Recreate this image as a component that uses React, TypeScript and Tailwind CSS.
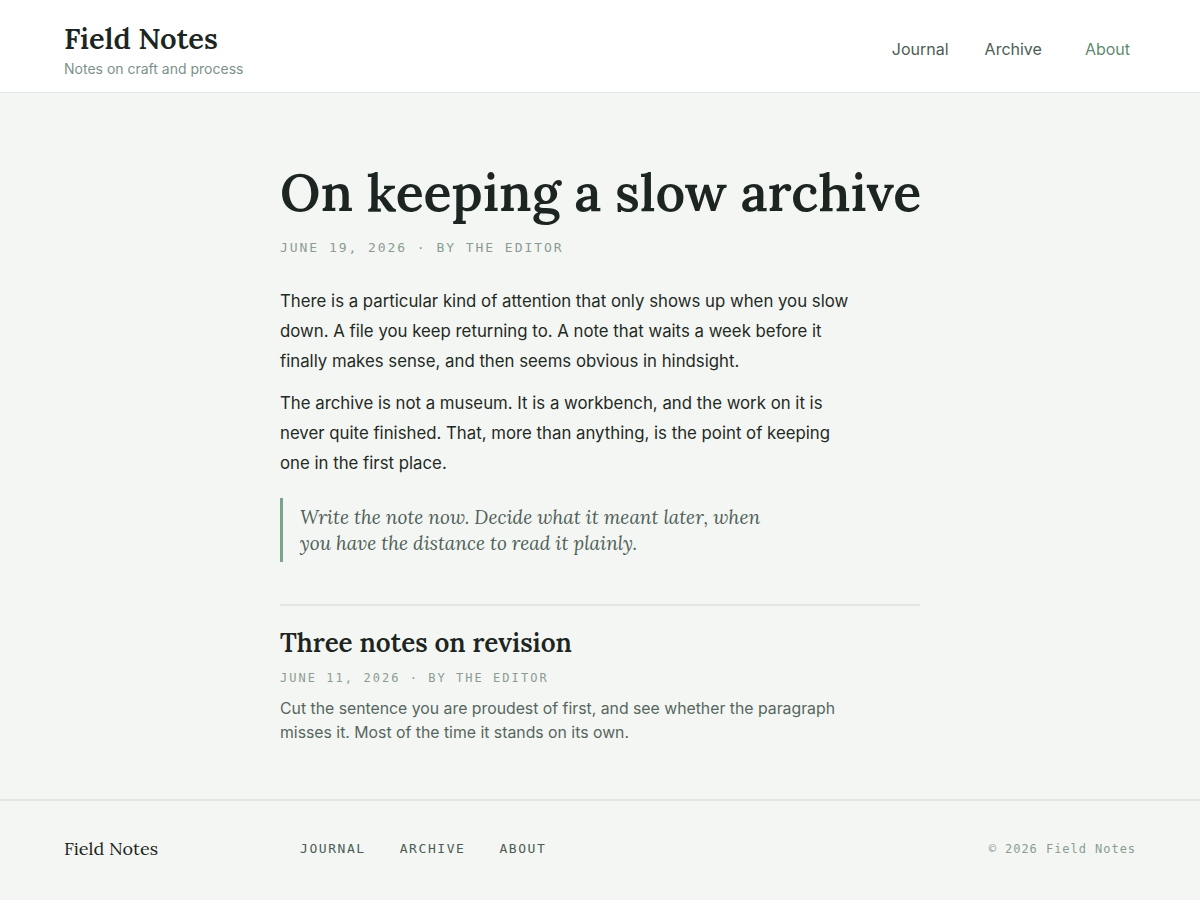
import React from "react";

const serif = "font-['Lora','Liberation_Serif','DejaVu_Serif',serif]";
const sans = "font-['Inter','Liberation_Sans',sans-serif]";
const mono = "font-['DejaVu_Sans_Mono','Liberation_Mono',monospace]";

function Header() {
  return (
    <header className="flex h-[93px] items-center justify-between border-b border-[#e3e7e3] bg-white pl-16 pr-[70px]">
      <div className="flex flex-col pt-[7px]">
        <a href="#" className={`${serif} text-[29px] font-semibold leading-[36px] text-[#1c2521]`}>
          Field Notes
        </a>
        <span className={`${sans} mt-[2px] text-[14px] leading-5 text-[#7d918a]`}>
          Notes on craft and process
        </span>
      </div>
      <nav className={`${sans} flex items-center pt-[6px] text-[16px] text-[#4b5d55]`}>
        <a href="#" className="mr-[36px]">Journal</a>
        <a href="#" className="mr-[43px]">Archive</a>
        <a href="#" className="text-[#5f8a6f]">About</a>
      </nav>
    </header>
  );
}

function Meta({ children, small }: { children: React.ReactNode; small?: boolean }) {
  return (
    <p
      className={`${mono} uppercase text-[#8b9c94] ${
        small ? "text-[12px] tracking-[0.17em]" : "text-[13px] tracking-[0.15em]"
      }`}
    >
      {children}
    </p>
  );
}

function Article() {
  return (
    <article className="mx-auto w-[640px] pt-[67px]">
      <h1 className={`${serif} whitespace-nowrap text-[52px] font-semibold leading-[64px] text-[#1c2521]`}>
        On keeping a slow archive
      </h1>
      <div className="mt-[14px]">
        <Meta>June 19, 2026 · By the Editor</Meta>
      </div>

      <div className={`${sans} mt-[28px] max-w-[580px] space-y-3 text-[16.8px] leading-[30px] text-[#1f2a25]`}>
        <p>
          There is a particular kind of attention that only shows up when you slow down. A file you
          keep returning to. A note that waits a week before it finally makes sense, and then seems
          obvious in hindsight.
        </p>
        <p>
          The archive is not a museum. It is a workbench, and the work on it is never quite
          finished. That, more than anything, is the point of keeping one in the first place.
        </p>
      </div>

      <blockquote
        className={`${serif} mt-[20px] max-w-[500px] border-l-[3px] border-[#7aa38a] py-[6px] pl-[17px] text-[19px] italic leading-[26px] text-[#4f6159]`}
      >
        Write the note now. Decide what it meant later, when you have the distance to read it plainly.
      </blockquote>

      <hr className="mt-[42px] border-t-2 border-[#e3e7e3]" />

      <section className="pt-[21px]">
        <h2 className={`${serif} text-[26px] font-semibold leading-[32px] text-[#1c2521]`}>
          Three notes on revision
        </h2>
        <div className="mt-[10px]">
          <Meta small>June 11, 2026 · By the Editor</Meta>
        </div>
        <p className={`${sans} mt-[10px] max-w-[580px] text-[15.8px] leading-6 text-[#56665f]`}>
          Cut the sentence you are proudest of first, and see whether the paragraph misses it. Most
          of the time it stands on its own.
        </p>
      </section>
    </article>
  );
}

function Footer() {
  return (
    <footer className="mt-[54px] flex h-[100px] items-center border-t-2 border-[#e3e7e3] pb-[2px] pl-16 pr-16">
      <span className={`${serif} w-[236px] text-[18px] text-[#1c2521]`}>Field Notes</span>
      <nav className={`${mono} flex gap-[34px] text-[13px] uppercase tracking-[0.12em] text-[#4b5d55]`}>
        <a href="#">Journal</a>
        <a href="#">Archive</a>
        <a href="#">About</a>
      </nav>
      <span className={`${mono} ml-auto text-[12px] tracking-[0.08em] text-[#8b9c94]`}>
        © 2026 Field Notes
      </span>
    </footer>
  );
}

export default function App() {
  return (
    <div className="min-h-[900px] bg-[#f4f6f3]">
      <Header />
      <Article />
      <Footer />
    </div>
  );
}
